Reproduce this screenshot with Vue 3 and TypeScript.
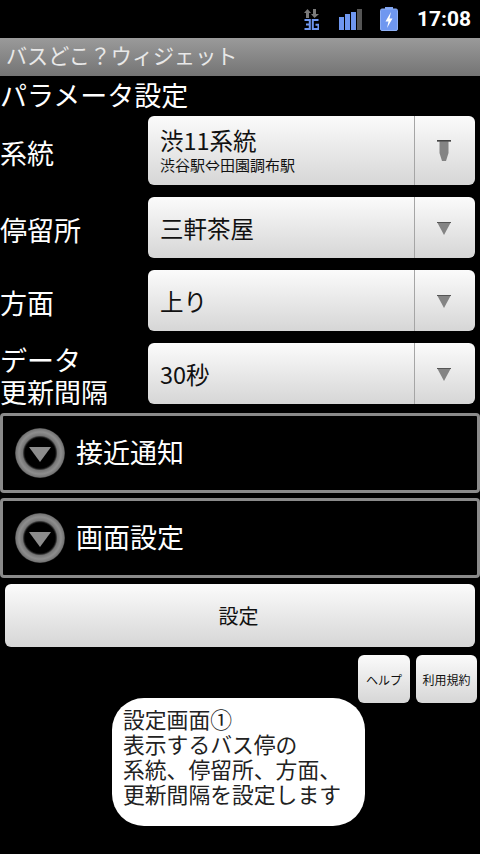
<script setup lang="ts">
interface Row { label: string[]; value: string; sub?: string; tall?: boolean }
const rows: Row[] = [
  { label: ['系統'], value: '渋11系統', sub: '渋谷駅⇔田園調布駅', tall: true },
  { label: ['停留所'], value: '三軒茶屋' },
  { label: ['方面'], value: '上り' },
  { label: ['データ', '更新間隔'], value: '30秒' },
]
const sections = ['接近通知', '画面設定']
</script>

<template>
  <div class="screen">
    <header class="status">
      <svg class="ic3g" width="15" height="21" viewBox="0 0 15 21">
        <path d="M3.500 0 7 4H5V9H2V4H0Z" fill="#7a7a7a" />
        <path d="M9 0H12V5H15L10.500 9 7 5H9Z" fill="#7a7a7a" />
        <path d="M0.500 11H5.800V20H0.500M2 15.500H5.800" fill="none" stroke="#6f97f0" stroke-width="2" />
        <path d="M14.500 11H8.800V20H14.500V15.800H11.500" fill="none" stroke="#6f97f0" stroke-width="2" />
      </svg>
      <svg class="signal" width="24" height="21" viewBox="0 0 24 21">
        <rect x="0" y="8" width="5" height="13" fill="#6f97f0" />
        <rect x="6" y="5" width="5" height="16" fill="#6f97f0" />
        <rect x="12" y="3" width="5" height="18" fill="#6f97f0" />
        <rect x="18" y="0" width="5" height="21" fill="#555" />
      </svg>
      <svg class="battery" width="18" height="24" viewBox="0 0 18 24">
        <rect x="5" y="0" width="8" height="3" fill="#7fa3f2" />
        <rect x="0.500" y="2" width="17" height="21.500" rx="1.500" fill="#6f97f0" stroke="#8fb0f5" />
        <path d="M11 5 5.500 14.500H8.500L7 21 12.500 11.500H9.500Z" fill="#fff" />
      </svg>
      <span class="clock">17:08</span>
    </header>
    <div class="titlebar">バスどこ？ウィジェット</div>
    <main class="content">
      <h1 class="heading">パラメータ設定</h1>
      <div class="rows">
        <div v-for="(row, i) in rows" :key="i" class="row">
          <div class="label"><div v-for="line in row.label" :key="line">{{ line }}</div></div>
          <div class="spinner" :class="{ tall: row.tall }">
            <div class="spin-text">
              <div class="value">{{ row.value }}</div>
              <div v-if="row.sub" class="sub">{{ row.sub }}</div>
            </div>
            <div class="spin-arrow">
              <svg v-if="row.tall" class="arrow-tall" width="14" height="22" viewBox="0 0 14 22">
                <path d="M0 0H14V1.500H11.500V13L9 21H5L2.500 13V1.500H0Z" fill="#848484" />
                <rect width="14" height="1.500" fill="#444" />
              </svg>
              <svg v-else class="arrow-small" width="14" height="13" viewBox="0 0 14 13">
                <path d="M0 0H14L7 13Z" fill="#848484" />
                <rect width="14" height="1" fill="#555" />
              </svg>
            </div>
          </div>
        </div>
      </div>
      <div class="sections">
        <div v-for="s in sections" :key="s" class="section">
          <span class="circle"><span class="tri"></span></span>
          <span class="section-text">{{ s }}</span>
        </div>
      </div>
      <div class="main-btn-wrap"><button class="btn main-btn">設定</button></div>
      <div class="small-btns">
        <button class="btn small help">ヘルプ</button>
        <button class="btn small terms">利用規約</button>
      </div>
    </main>
    <div class="toast">設定画面①<br />表示するバス停の<br />系統、停留所、方面、<br />更新間隔を設定します</div>
  </div>
</template>

<style>
html, body { margin: 0; background: #000; }
</style>

<style scoped>
.screen {
  position: relative;
  width: 480px;
  height: 854px;
  background: #000;
  color: #fff;
  overflow: hidden;
  font-family: "Noto Sans CJK JP", "Liberation Sans", sans-serif;
}
.status {
  height: 38px;
  display: flex;
  align-items: center;
  justify-content: flex-end;
  box-sizing: border-box;
  padding: 0 9px 0 0;
}
.ic3g { margin-right: 20px; margin-top: 1px; }
.signal { margin-right: 17px; margin-top: 1px; }
.battery { margin-right: 19px; }
.clock {
  font-family: "Roboto", "Liberation Sans", sans-serif;
  font-weight: 700;
  font-size: 21px;
  line-height: 38px;
}
.titlebar {
  height: 38px;
  line-height: 34px;
  padding-left: 6px;
  font-size: 21.100px;
  color: #e8e8e8;
  background: linear-gradient(#9a9a9a, #747474);
}
.content { display: flex; flex-direction: column; }
.heading {
  margin: 0;
  height: 40px;
  line-height: 37px;
  font-size: 27px;
  font-weight: 400;
}
.rows { display: flex; flex-direction: column; gap: 12px; }
.row { display: flex; align-items: center; }
.label {
  width: 148px;
  flex: none;
  font-size: 27px;
  line-height: 32px;
  margin-bottom: -4px;
}
.spinner {
  width: 327px;
  height: 61px;
  flex: none;
  display: flex;
  border-radius: 6px;
  background: linear-gradient(#fbfbfb, #d6d6d6);
  color: #111;
}
.spinner.tall { height: 69px; }
.spin-text {
  flex: 1;
  padding-left: 12px;
  display: flex;
  flex-direction: column;
  justify-content: center;
}
.value { font-size: 23.500px; line-height: 30px; }
.sub { font-size: 15px; line-height: 20px; }
.tall .spin-text { padding-bottom: 2px; box-sizing: border-box; }
.spin-arrow {
  width: 60px;
  border-left: 1px solid #a5a5a5;
  display: flex;
  align-items: center;
  justify-content: center;
}
.arrow-tall { margin-right: 2px; }
.arrow-small { margin-right: 2px; margin-top: 1px; }
.sections {
  display: flex;
  flex-direction: column;
  gap: 5px;
  margin-top: 9px;
}
.section {
  height: 80px;
  box-sizing: border-box;
  border: 3px solid #8a8a8a;
  border-radius: 4px;
  display: flex;
  align-items: center;
  padding-left: 12px;
  gap: 12px;
  width: 480px;
}
.circle {
  width: 50px;
  height: 50px;
  border-radius: 50%;
  background: radial-gradient(circle, #000 0 15px, #1c1c1c 16px, #757575 17.500px, #8e8e8e 21px, #767676 24px, #3a3a3a 25px);
  display: flex;
  align-items: center;
  justify-content: center;
}
.tri {
  width: 0;
  height: 0;
  border-left: 11.500px solid transparent;
  border-right: 11.500px solid transparent;
  border-top: 15px solid #8c8c8c;
  margin-top: 3px;
}
.section-text { font-size: 27px; line-height: 1; margin: -4px 0 0 -1px; }
.main-btn-wrap { padding: 6px 5px 0; }
.btn {
  display: block;
  padding: 0;
  border: none;
  border-radius: 6px;
  background: linear-gradient(#fbfbfb, #d6d6d6);
  color: #111;
  font-family: inherit;
}
.main-btn { width: 470px; height: 63px; font-size: 20px; text-indent: -3px; }
.small-btns {
  display: flex;
  justify-content: flex-end;
  gap: 6px;
  padding: 8px 3px 0 0;
}
.small { height: 48px; font-size: 12px; white-space: nowrap; }
.help { width: 52px; }
.terms { width: 61px; }
.toast {
  position: absolute;
  left: 112px;
  top: 698px;
  width: 253px;
  height: 128px;
  box-sizing: border-box;
  padding: 8px 0 0 11px;
  background: #fff;
  color: #222;
  border-radius: 32px;
  font-size: 21.800px;
  line-height: 25px;
  white-space: nowrap;
}
</style>
